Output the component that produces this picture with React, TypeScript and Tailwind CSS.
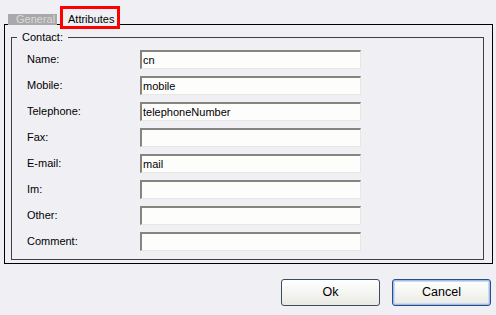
import React from 'react';

const FIELDS: { label: string; value: string }[] = [
  { label: 'Name:', value: 'cn' },
  { label: 'Mobile:', value: 'mobile' },
  { label: 'Telephone:', value: 'telephoneNumber' },
  { label: 'Fax:', value: '' },
  { label: 'E-mail:', value: 'mail' },
  { label: 'Im:', value: '' },
  { label: 'Other:', value: '' },
  { label: 'Comment:', value: '' },
];

export default function App() {
  return (
    <div className="w-[496px] h-[315px] bg-[#f0f0f4] pt-[6px] pl-[4px] font-['Liberation_Sans',Arial,sans-serif] text-[11px] text-black overflow-hidden">
      {/* Tabs */}
      <div className="flex items-start h-[18px] pl-[4px]">
        <div className="relative z-10 mt-[8px] h-[11px] w-[49px] bg-[#a9a9a9] text-[#dadada] leading-[11px] pl-[8px] whitespace-nowrap">
          General
        </div>
        <div className="relative z-10 ml-[3px] h-[23px] w-[60px] border-[3px] border-[#ff0000] bg-[#f0f0f4] pl-[5px] pt-[5px] leading-[11px] whitespace-nowrap">
          Attributes
        </div>
      </div>

      {/* Panel */}
      <div className="w-[489px] h-[240px] border border-black pl-[6px] pt-[12px]">
        <div className="w-[473px] h-[223px] border border-[#404040] flex flex-col">
          <div className="-mt-[8px] ml-[5px] px-[5px] w-fit h-[14px] leading-[14px] bg-[#f0f0f4]">Contact:</div>
          <div className="mt-[6px] pl-[15px] flex flex-col gap-[7px]">
            {FIELDS.map(f => (
              <div key={f.label} className="flex items-center h-[19px]">
                <span className="w-[113px]">{f.label}</span>
                <input
                  readOnly
                  value={f.value}
                  className="w-[221px] h-[19px] bg-[#fdfdfb] border-t-2 border-l-2 border-t-[#85857f] border-l-[#85857f] border-b border-r border-b-[#e6e6e2] border-r-[#e6e6e2] pl-[1px] text-[11px] outline-none"
                />
              </div>
            ))}
          </div>
        </div>
      </div>

      {/* Buttons */}
      <div className="mt-[15px] flex justify-end gap-[12px] pr-[5px]">
        <button className="w-[99px] h-[27px] rounded-[3px] border border-[#3c4a62] bg-gradient-to-b from-white to-[#eaeae4] text-[12.5px]">
          Ok
        </button>
        <button className="w-[99px] h-[27px] rounded-[3px] border border-[#2a4d85] bg-gradient-to-b from-white to-[#eaeae4] text-[12.5px] shadow-[inset_0_0_0_1px_#9fbdea,inset_0_0_0_2px_#c9dbf6]">
          Cancel
        </button>
      </div>
    </div>
  );
}
